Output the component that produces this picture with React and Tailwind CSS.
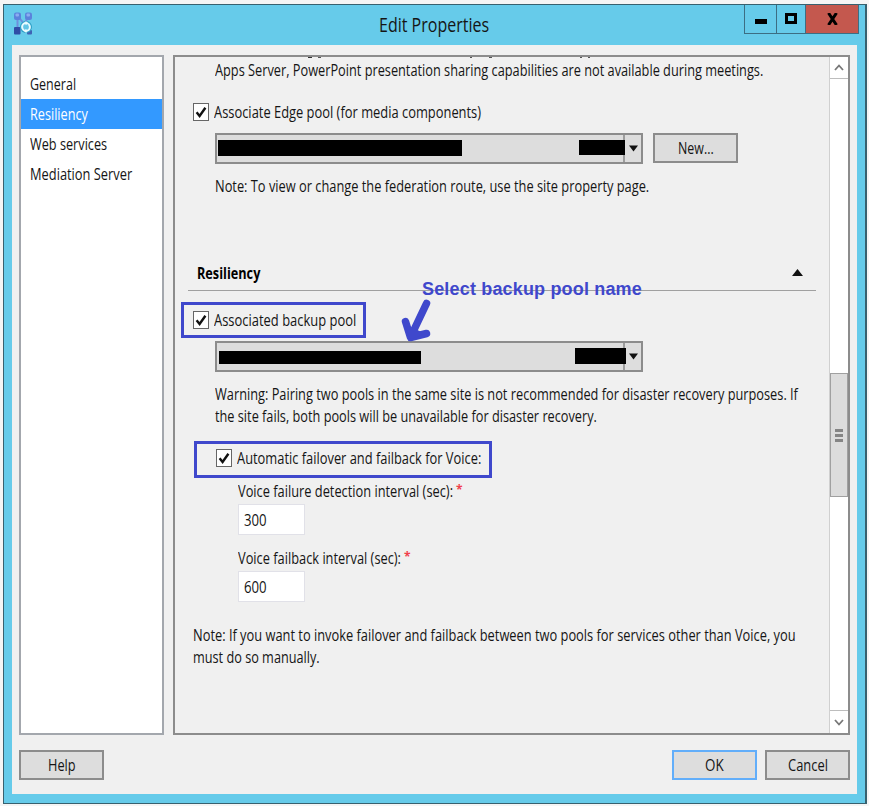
import { useLayoutEffect, useRef } from "react";

// Single line of text, condensed horizontally to a given width.
const Line = ({ width, className = "", children }) => {
  const ref = useRef(null);

  useLayoutEffect(() => {
    const node = ref.current;
    node.style.transform = `scaleX(${width / node.offsetWidth})`;
  }, [width, children]);

  return (
    <span className={`block h-[22px] shrink-0 text-[15.5px] leading-[22px] ${className}`} style={{ width }}>
      <span className="inline-block origin-left whitespace-nowrap" ref={ref}>
        {children}
      </span>
    </span>
  );
};

const Checkbox = () => (
  <span className="flex h-[18px] w-[16px] shrink-0 items-center justify-center border border-[#666] bg-white">
    <svg className="h-[13px] w-[12px]" viewBox="0 0 12 13" fill="none" stroke="#111" strokeWidth="2.4">
      <path d="M1.6 6.2 4.6 10 10.4 1.8" />
    </svg>
  </span>
);

const DialogButton = ({ label, width, primary, className = "" }) => (
  <button
    className={`flex h-[30px] w-[85px] shrink-0 items-center justify-center border-2 bg-[#dddddd] ${primary ? "border-[#62aefa]" : "border-[#8c8c8c]"} ${className}`}
    type="button"
  >
    <Line width={width}>{label}</Line>
  </button>
);

const ComboBox = ({ children }) => (
  <div className="flex h-[31px] w-[428px] shrink-0 border-2 border-[#8c8c8c] bg-[#dddddd]">
    <div className="flex w-[408px] border-r-2 border-[#9c9c9c]">{children}</div>
    <div className="flex flex-1 items-center justify-center">
      <svg className="h-[7px] w-[9px]" viewBox="0 0 9 7">
        <path d="M0 0.5h9L4.5 6.5z" fill="#111" />
      </svg>
    </div>
  </div>
);

const NAV_ITEMS = [
  { label: "General", width: 46 },
  { label: "Resiliency", width: 58, active: true },
  { label: "Web services", width: 77 },
  { label: "Mediation Server", width: 102 },
];

const TitleBar = () => (
  <header className="relative flex h-[40px] shrink-0 justify-end">
    <svg className="absolute left-[9px] top-[7px] h-[24px] w-[21px]" viewBox="0 0 21 24">
      <path d="M5 4 11 12M16 4 11 12M4.500 4v16" stroke="#6f8fdc" strokeWidth="2" fill="none" />
      <rect x="1" y="0.500" width="7" height="7.500" rx="2" fill="#5b82dc" />
      <rect x="2.500" y="1.500" width="3.500" height="3" rx="1" fill="#8badf0" />
      <rect x="12" y="0.500" width="7" height="7.500" rx="2" fill="#5b82dc" />
      <rect x="13.500" y="1.500" width="3.500" height="3" rx="1" fill="#8badf0" />
      <rect x="1" y="15" width="6.500" height="7.500" rx="1" fill="#2f4da6" />
      <rect x="14" y="18" width="5" height="4.500" rx="1" fill="#3f62b4" />
      <circle cx="13" cy="15" r="6" fill="#2ea0c8" />
      <circle cx="13" cy="15" r="3.900" fill="#63c5e6" stroke="#e9fbff" strokeWidth="2" strokeDasharray="10 2.250" strokeDashoffset="4" />
      <path d="m12.500 9 4 2.500-4 1.500zM13.500 21l-4-2.500 4-1.500z" fill="#e9fbff" />
    </svg>
    <div className="absolute left-[375px] top-[9px]">
      <Line className="text-[19.5px]" width={110}>
        Edit Properties
      </Line>
    </div>
    <div className="mr-[6px] flex h-[29px] w-[115px] border-x border-b border-[#3c6e83]">
      <div className="flex w-[32px] justify-center border-r border-[#3c6e83] pt-[14px]">
        <span className="h-[5px] w-[12px] bg-black" />
      </div>
      <div className="flex w-[29px] justify-center border-r border-[#3c6e83] pt-[8px]">
        <span className="h-[11px] w-[12px] border-[3px] border-black" />
      </div>
      <div className="flex flex-1 items-center justify-center bg-[#c4584e]">
        <svg className="h-[12px] w-[11px]" viewBox="0 0 11 12" fill="none" stroke="#000" strokeWidth="3">
          <path d="M1.5 0 9.5 12M9.5 0 1.5 12" />
        </svg>
      </div>
    </div>
  </header>
);

const ScrollBar = () => (
  <div className="flex w-[19px] shrink-0 flex-col border-l border-[#d0d0d0] bg-white">
    <div className="flex h-[22px] items-center justify-center border-b border-[#bdbdbd]">
      <svg className="h-[7px] w-[10px]" viewBox="0 0 10 7" fill="none" stroke="#777" strokeWidth="1.8">
        <path d="M1 6 5 1.5 9 6" />
      </svg>
    </div>
    <div className="mt-[294px] flex h-[124px] flex-col items-center justify-center gap-[2px] border border-[#a0a0a0] bg-[#dcdcdc]">
      <span className="h-[3px] w-[8px] bg-[#858585]" />
      <span className="h-[3px] w-[8px] bg-[#858585]" />
      <span className="h-[3px] w-[8px] bg-[#858585]" />
    </div>
    <div className="mt-auto flex h-[23px] items-center justify-center border-t border-[#bdbdbd]">
      <svg className="h-[7px] w-[10px]" viewBox="0 0 10 7" fill="none" stroke="#777" strokeWidth="1.8">
        <path d="M1 1 5 5.5 9 1" />
      </svg>
    </div>
  </div>
);

const IntervalField = ({ label, width, value }) => (
  <div className="ml-[63px]">
    <div className="flex gap-[3px]">
      <Line width={width}>{label}</Line>
      <span className="h-[22px] text-[12px] leading-[19px] font-bold text-[#f0404c]">*</span>
    </div>
    <div className="mt-[2px] flex h-[31px] w-[67px] items-center border border-[#e1e1e8] bg-white pl-[5px]">
      <Line width={23}>{value}</Line>
    </div>
  </div>
);

const Annotation = () => (
  <>
    <p className="absolute left-[247px] top-[221px] whitespace-nowrap font-['Liberation_Sans',Arial,sans-serif] text-[18px] font-bold leading-[22px] tracking-[0.17px] text-[#3f48cc]">
      Select backup pool name
    </p>
    <svg className="absolute left-[225px] top-[240px] h-[48px] w-[34px]" viewBox="400 297 34 48" fill="none" stroke="#3f48cc" strokeLinecap="round" strokeLinejoin="round">
      <path d="M426.500 303.500 412 334" strokeWidth="7.500" />
      <path d="M405.500 321.500 410.500 337.500 426.500 333.500" strokeWidth="7.500" />
      <path d="M409 329 412 336.500 419 333.500z" fill="#3f48cc" strokeWidth="5" />
    </svg>
  </>
);

const App = () => (
  <div className="h-[806px] w-[869px] overflow-hidden bg-[#f5f5f5] pl-[3px] pt-[4px] font-['Open_Sans','Noto_Sans',sans-serif] text-[#151515]">
    <div className="flex h-[800px] w-[864px] flex-col border border-r-2 border-[#38616f] bg-[#66cbea]">
      <TitleBar />
      <div className="ml-[8px] flex h-[749px] w-[845px] shrink-0 flex-col bg-[#f0f0f0] px-[7px] pt-[10px]">
        <div className="flex h-[680px] gap-[9px]">
          <nav className="w-[145px] shrink-0 border-2 border-[#a3a7ad] bg-white pt-[12px]">
            {NAV_ITEMS.map((item) => (
              <div className={`flex h-[30px] items-center pl-[9px] ${item.active ? "bg-[#3399ff] text-white" : ""}`} key={item.label}>
                <Line width={item.width}>{item.label}</Line>
              </div>
            ))}
          </nav>

          <main className="relative flex w-[677px] border-2 border-[#8c8c8c]">
            <section className="flex w-[654px] shrink-0 flex-col">
              {/* descenders of the line scrolled out of view */}
              <div className="flex h-[2px] pl-[133px]">
                <span className="h-px w-[4px] bg-[#333]" />
                <span className="ml-[6px] h-px w-[3px] bg-[#555]" />
                <span className="ml-[149px] h-px w-[2px] bg-[#555]" />
                <span className="ml-[17px] h-px w-[3px] bg-[#555]" />
                <span className="ml-[88px] h-px w-[2px] bg-[#555]" />
                <span className="ml-[6px] h-px w-[2px] bg-[#555]" />
              </div>
              <Line className="ml-[40px]" width={548}>
                Apps Server, PowerPoint presentation sharing capabilities are not available during meetings.
              </Line>

              <div className="ml-[18px] mt-[20px] flex items-center gap-[5px]">
                <Checkbox />
                <Line width={267}>Associate Edge pool (for media components)</Line>
              </div>
              <div className="ml-[40px] mt-[10px] flex gap-[10px]">
                <ComboBox>
                  <span className="ml-[1px] mt-[5px] h-[16px] w-[244px] shrink-0 bg-black" />
                  <span className="ml-[117px] mt-[5px] h-[15px] w-[46px] shrink-0 bg-black" />
                </ComboBox>
                <DialogButton label="New..." width={36} />
              </div>
              <Line className="ml-[40px] mt-[11px]" width={434}>
                Note: To view or change the federation route, use the site property page.
              </Line>

              <div className="ml-[13px] mt-[65px] flex h-[29px] w-[628px] justify-between border-b-[1.5px] border-[#a0a0a0] pl-[9px] pr-[13px]">
                <Line className="font-bold text-black" width={63}>
                  Resiliency
                </Line>
                <svg className="mt-[7px] h-[7px] w-[11px]" viewBox="0 0 11 7">
                  <path d="M0 7h11L5.5 0z" fill="#111" />
                </svg>
              </div>

              <div className="ml-[6px] mt-[11px] flex h-[36px] w-[185px] shrink-0 items-center gap-[5px] border-[3px] border-[#3f48cc] pl-[9px]">
                <Checkbox />
                <Line width={142}>Associated backup pool</Line>
              </div>
              <div className="ml-[40px] mt-[3px]">
                <ComboBox>
                  <span className="ml-[2px] mt-[8px] h-[13px] w-[202px] shrink-0 bg-black" />
                  <span className="ml-[154px] mt-[5px] h-[16px] w-[51px] shrink-0 bg-black" />
                </ComboBox>
              </div>
              <Line className="ml-[40px] mt-[11px]" width={583}>
                Warning: Pairing two pools in the same site is not recommended for disaster recovery purposes. If
              </Line>
              <Line className="ml-[40px]" width={382}>
                the site fails, both pools will be unavailable for disaster recovery.
              </Line>

              <div className="ml-[19px] mt-[14px] flex h-[37px] w-[298px] shrink-0 items-center gap-[5px] border-[3px] border-[#3f48cc] pb-[3px] pl-[19px]">
                <Checkbox />
                <Line width={244}>Automatic failover and failback for Voice:</Line>
              </div>

              <div className="mt-[2px] flex flex-col gap-[12px]">
                <IntervalField label="Voice failure detection interval (sec):" value="300" width={215} />
                <IntervalField label="Voice failback interval (sec):" value="600" width={163} />
              </div>

              <Line className="ml-[18px] mt-[22px]" width={603}>
                Note: If you want to invoke failover and failback between two pools for services other than Voice, you
              </Line>
              <Line className="ml-[18px]" width={127}>
                must do so manually.
              </Line>
            </section>
            <ScrollBar />
            <Annotation />
          </main>
        </div>

        <footer className="mt-[15px] flex">
          <DialogButton label="Help" width={28} />
          <DialogButton className="ml-auto" label="OK" primary width={19} />
          <DialogButton className="ml-[8px]" label="Cancel" width={40} />
        </footer>
      </div>
    </div>
  </div>
);

export default App;
